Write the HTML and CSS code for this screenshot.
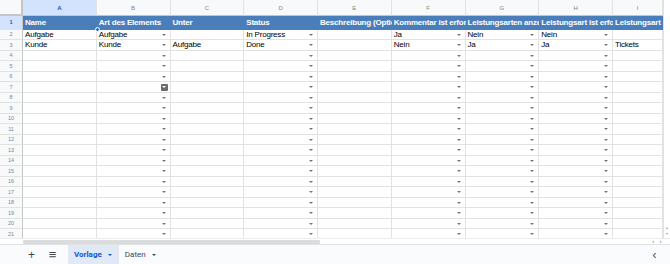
FILE: index.html
```html
<!DOCTYPE html>
<html lang="de">
<head>
  <meta charset="UTF-8" />
  <title>Vorlage</title>
  <link rel="stylesheet" href="styles.css">
</head>
<body>
  <div class="sheet">
    <div class="grid-area">
      <div class="grid" id="grid">
        <div class="corner"></div>
        <div class="col-head active">A</div>
        <div class="col-head">B</div>
        <div class="col-head">C</div>
        <div class="col-head">D</div>
        <div class="col-head">E</div>
        <div class="col-head">F</div>
        <div class="col-head">G</div>
        <div class="col-head">H</div>
        <div class="col-head">I</div>

        <div class="row-head active">1</div>
        <div class="cell head">Name</div>
        <div class="cell head">Art des Elements</div>
        <div class="cell head">Unter</div>
        <div class="cell head">Status</div>
        <div class="cell head">Beschreibung (Optional)</div>
        <div class="cell head">Kommentar ist erforderlich</div>
        <div class="cell head">Leistungsarten anzeigen</div>
        <div class="cell head">Leistungsart ist erforderlich</div>
        <div class="cell head">Leistungsart</div>

        <div class="row-head">2</div>
        <div class="cell">Aufgabe</div>
        <div class="cell dd">Aufgabe</div>
        <div class="cell"></div>
        <div class="cell dd">In Progress</div>
        <div class="cell"></div>
        <div class="cell dd">Ja</div>
        <div class="cell dd">Nein</div>
        <div class="cell dd">Nein</div>
        <div class="cell"></div>

        <div class="row-head">3</div>
        <div class="cell">Kunde</div>
        <div class="cell dd">Kunde</div>
        <div class="cell">Aufgabe</div>
        <div class="cell dd">Done</div>
        <div class="cell"></div>
        <div class="cell dd">Nein</div>
        <div class="cell dd">Ja</div>
        <div class="cell dd">Ja</div>
        <div class="cell">Tickets</div>

        <span class="handle"></span>
      </div>
      <div class="vscroll">
        <span class="arrow up"></span>
        <span class="arrow down"></span>
      </div>
    </div>

    <div class="hscroll">
      <div class="thumb"></div>
      <div class="hbtns">
        <span class="arrow left"></span>
        <span class="arrow right"></span>
      </div>
    </div>

    <div class="tabbar">
      <button class="tool">+</button>
      <button class="tool menu">&#8801;</button>
      <div class="tab current">Vorlage <span class="caret"></span></div>
      <div class="tab">Daten <span class="caret"></span></div>
      <div class="spacer"></div>
      <button class="tool collapse">&#8249;</button>
    </div>
  </div>

  <script>
    // empty rows 4..21, dropdowns in B, D, F, G, H
    const grid = document.getElementById('grid');
    const ddCols = [1, 3, 5, 6, 7];
    for (let r = 4; r <= 21; r++) {
      const head = document.createElement('div');
      head.className = 'row-head';
      head.textContent = r;
      grid.appendChild(head);
      for (let c = 0; c < 9; c++) {
        const cell = document.createElement('div');
        cell.className = 'cell';
        if (ddCols.includes(c)) cell.classList.add('dd');
        if (r === 7 && c === 1) cell.classList.add('hover');
        grid.appendChild(cell);
      }
    }
  </script>
</body>
</html>
```

FILE: styles.css
```css
* {
  box-sizing: border-box;
}

body {
  margin: 0;
  background-color: #ffffff;
  font-family: "Liberation Sans", Arial, sans-serif;
  overflow: hidden;
}

.sheet {
  width: 670px;
  height: 264px;
  display: flex;
  flex-direction: column;
}

.grid-area {
  height: 238px;
  display: flex;
  overflow: hidden;
}

.grid {
  position: relative;
  display: grid;
  grid-template-columns: 23px repeat(8, 73.75px) 50px;
  grid-template-rows: 16px 13.5px;
  grid-auto-rows: 10.5px;
  width: 663px;
  align-content: start;
}

.corner {
  background-color: #f8f9fa;
  border-right: 2px solid #c4c7c5;
  border-bottom: 2px solid #c4c7c5;
}

.col-head {
  background-color: #f8f9fa;
  border-right: 1px solid #e1e3e1;
  border-bottom: 1px solid #c4c7c5;
  color: #80868b;
  font-size: 6px;
  display: flex;
  align-items: center;
  justify-content: center;
}

.col-head.active {
  background-color: #d3e3fd;
  color: #0b57d0;
  font-weight: bold;
}

.row-head {
  background-color: #f8f9fa;
  border-right: 1px solid #c4c7c5;
  border-bottom: 1px solid #e1e3e1;
  color: #80868b;
  font-size: 5.5px;
  display: flex;
  align-items: center;
  justify-content: center;
}

.row-head.active {
  background-color: #d3e3fd;
  color: #0b57d0;
  font-weight: bold;
}

.cell {
  position: relative;
  border-right: 1px solid #e2e2e2;
  border-bottom: 1px solid #e2e2e2;
  font-size: 8px;
  letter-spacing: -0.2px;
  line-height: 10px;
  color: #000;
  padding: 0 2px;
  white-space: nowrap;
  overflow: hidden;
}

.cell.head {
  background-color: #4a7ebb;
  color: #ffffff;
  font-weight: bold;
  border-right: none;
  border-bottom: 1px solid #4a7ebb;
  line-height: 13px;
}

.handle {
  position: absolute;
  left: 94.5px;
  top: 26.5px;
  width: 5px;
  height: 5px;
  border-radius: 50%;
  background-color: #1a73e8;
  border: 1px solid #ffffff;
}

.cell.dd::after {
  content: "";
  position: absolute;
  right: 4px;
  top: 4px;
  border-left: 2px solid transparent;
  border-right: 2px solid transparent;
  border-top: 2px solid #757575;
}

.cell.hover::before {
  content: "";
  position: absolute;
  right: 2px;
  top: 1.5px;
  width: 7px;
  height: 7px;
  border-radius: 1px;
  background-color: #6b6b6b;
}

.cell.hover::after {
  right: 3.5px;
  border-top-color: #ffffff;
  z-index: 1;
}

.vscroll {
  width: 7px;
  border-left: 1px solid #e1e3e1;
  display: flex;
  flex-direction: column;
  justify-content: flex-end;
  align-items: center;
  gap: 4px;
  padding-bottom: 2px;
}

.arrow {
  width: 0;
  height: 0;
  border: 1.5px solid transparent;
}

.arrow.up {
  border-bottom: 2px solid #9aa0a6;
}

.arrow.down {
  border-top: 2px solid #9aa0a6;
}

.hscroll {
  height: 6px;
  display: flex;
  align-items: center;
  border-top: 1px solid #ebebeb;
  padding-left: 23px;
}

.thumb {
  width: 297px;
  height: 4px;
  background-color: #dadce0;
  border-radius: 1px;
}

.hbtns {
  margin-left: auto;
  margin-right: 7px;
  display: flex;
  gap: 6px;
}

.arrow.left {
  border-right: 2px solid #9aa0a6;
}

.arrow.right {
  border-left: 2px solid #9aa0a6;
}

.tabbar {
  flex: 1;
  background-color: #f9fbfd;
  border-top: 1px solid #e1e3e1;
  display: flex;
  align-items: stretch;
  padding-left: 24px;
  font-family: Roboto, "Liberation Sans", Arial, sans-serif;
}

.tool {
  border: none;
  background: none;
  width: 15px;
  padding: 0;
  margin-right: 6px;
  font-size: 12px;
  color: #444746;
  display: flex;
  align-items: center;
  justify-content: center;
}

.tool.menu {
  font-size: 13px;
  margin-right: 8px;
}

.tab {
  display: flex;
  align-items: center;
  gap: 6px;
  padding: 0 7px 0 6px;
  font-size: 8px;
  color: #444746;
}

.tab.current {
  background-color: #e1e9f7;
  color: #0b57d0;
  font-weight: bold;
}

.caret {
  width: 0;
  height: 0;
  border-left: 2px solid transparent;
  border-right: 2px solid transparent;
  border-top: 2.5px solid currentColor;
}

.spacer {
  flex: 1;
}

.tool.collapse {
  font-size: 12px;
  margin-right: 8px;
}
```
